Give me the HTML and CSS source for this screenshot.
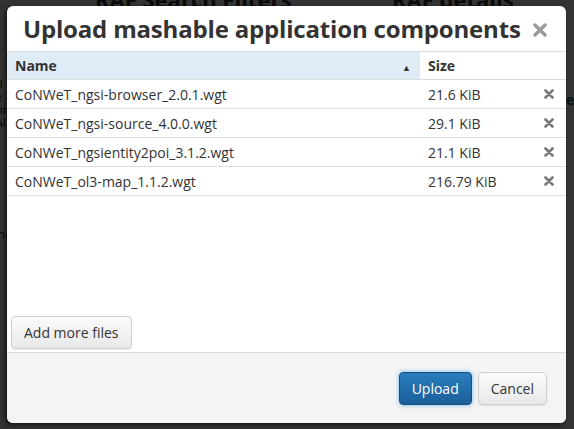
FILE: index.html
```html
<!DOCTYPE html>
<html>
<head>
<meta charset="utf-8">
<link rel="stylesheet" href="styles.css">
</head>
<body>
<div class="page">
  <div class="bg-top">
    <span class="bg-title t1">RAF Search Filters</span>
    <span class="bg-title t2">RAF details</span>
  </div>
  <div class="bg-left">
    <span>d</span><span>e</span><span>nt</span><span>Al</span>
  </div>
  <div class="bg-left2">nc</div>
  <div class="bg-right">e</div>
</div>
<div class="overlay"></div>
<div class="modal">
  <div class="modal-header">
    <h1 class="modal-title">Upload mashable application components</h1>
    <span class="close">
      <svg width="14" height="14" viewBox="0 0 14 14"><path d="M2 2 L12 12 M12 2 L2 12" stroke="#9a9a9a" stroke-width="3.4" stroke-linecap="round"/></svg>
    </span>
  </div>
  <div class="modal-body">
    <div class="table-wrap">
      <table class="files">
        <thead>
          <tr>
            <th class="col-name sorted">Name<span class="sort">&#9650;</span></th>
            <th class="col-size">Size</th>
            <th class="col-act"></th>
          </tr>
        </thead>
        <tbody>
          <tr><td>CoNWeT_ngsi-browser_2.0.1.wgt</td><td>21.6 KiB</td><td class="act"><svg width="10" height="10" viewBox="0 0 10 10"><path d="M1.5 1.5 L8.5 8.5 M8.5 1.5 L1.5 8.5" stroke="#777" stroke-width="2.6" stroke-linecap="round"/></svg></td></tr>
          <tr><td>CoNWeT_ngsi-source_4.0.0.wgt</td><td>29.1 KiB</td><td class="act"><svg width="10" height="10" viewBox="0 0 10 10"><path d="M1.5 1.5 L8.5 8.5 M8.5 1.5 L1.5 8.5" stroke="#777" stroke-width="2.6" stroke-linecap="round"/></svg></td></tr>
          <tr><td>CoNWeT_ngsientity2poi_3.1.2.wgt</td><td>21.1 KiB</td><td class="act"><svg width="10" height="10" viewBox="0 0 10 10"><path d="M1.5 1.5 L8.5 8.5 M8.5 1.5 L1.5 8.5" stroke="#777" stroke-width="2.6" stroke-linecap="round"/></svg></td></tr>
          <tr><td>CoNWeT_ol3-map_1.1.2.wgt</td><td>216.79 KiB</td><td class="act"><svg width="10" height="10" viewBox="0 0 10 10"><path d="M1.5 1.5 L8.5 8.5 M8.5 1.5 L1.5 8.5" stroke="#777" stroke-width="2.6" stroke-linecap="round"/></svg></td></tr>
        </tbody>
      </table>
    </div>
    <div class="body-actions">
      <button class="btn">Add more files</button>
    </div>
  </div>
  <div class="modal-footer">
    <button class="btn btn-primary">Upload</button>
    <button class="btn">Cancel</button>
  </div>
</div>
</body>
</html>
```

FILE: styles.css
```css
html, body {
  margin: 0;
  padding: 0;
  width: 574px;
  height: 429px;
  overflow: hidden;
  font-family: "Open Sans", "Liberation Sans", sans-serif;
  background: #fff;
}

.page {
  position: relative;
  width: 574px;
  height: 429px;
  color: #222;
}

.bg-top {
  position: absolute;
  left: 0;
  top: -16px;
  width: 574px;
  height: 22px;
}
.bg-title {
  position: absolute;
  top: 0;
  font-size: 22px;
  font-weight: bold;
  color: #333;
}
.t1 { left: 95px; }
.t2 { left: 392px; }

.bg-left {
  position: absolute;
  left: -4px;
  top: 78px;
  display: flex;
  flex-direction: column;
  gap: 2px;
  font-size: 11px;
  line-height: 11px;
  color: #222;
}
.bg-left2 {
  position: absolute;
  left: -3px;
  top: 225px;
  font-size: 13px;
  color: #222;
}
.bg-right {
  position: absolute;
  left: 566px;
  top: 90px;
  font-size: 14px;
  font-weight: bold;
  color: #1d5f73;
}

.overlay {
  position: absolute;
  left: 0;
  top: 0;
  width: 574px;
  height: 429px;
  background: rgba(0, 0, 0, 0.8);
}

.modal {
  position: absolute;
  left: 7px;
  top: 6px;
  width: 559px;
  height: 417px;
  background: #fff;
  border-radius: 6px;
  box-shadow: -2px 2px 4px rgba(0, 0, 0, 0.6);
  display: flex;
  flex-direction: column;
  overflow: hidden;
  color: #333;
}

.modal-header {
  height: 45px;
  border-bottom: 1px solid #dcdcdc;
  display: flex;
  align-items: center;
  padding: 0 19px 0 16px;
  flex: none;
}
.modal-title {
  margin: 0;
  flex: 1;
  font-size: 24px;
  font-weight: bold;
  color: #333;
  letter-spacing: -0.18px;
  white-space: nowrap;
}
.close {
  display: flex;
  margin-top: 2px;
}

.modal-body {
  flex: 1;
  display: flex;
  flex-direction: column;
  padding: 0 0 3px 4px;
}
.table-wrap {
  flex: 1;
  margin-left: -4px;
}
.files {
  width: 100%;
  border-collapse: collapse;
  font-size: 14px;
}
.files th, .files td {
  height: 28px;
  padding: 0 0 0 8px;
  border-bottom: 1px solid #dedede;
  text-align: left;
  white-space: nowrap;
}
.files th {
  font-weight: bold;
  height: 27px;
}
.col-name {
  width: 405px;
  position: relative;
}
.sorted { background: #dfecf6; }
.sort {
  position: absolute;
  right: 9px;
  top: 9px;
  font-size: 9px;
  color: #333;
}
.col-size { width: 100px; }
.act {
  padding-left: 16px !important;
}
.act svg { display: block; }

.body-actions {
  display: flex;
}

.btn {
  font-family: "Open Sans", "Liberation Sans", sans-serif;
  font-size: 14px;
  color: #333;
  height: 33px;
  padding: 0 12px;
  border: 1px solid #cfcfcf;
  border-radius: 4px;
  background: linear-gradient(#fbfbfb, #e8e8e8);
  box-shadow: 0 1px 1px rgba(0, 0, 0, 0.08);
}

.modal-footer {
  flex: none;
  height: 70px;
  background: #f4f4f4;
  border-top: 1px solid #dadada;
  display: flex;
  justify-content: flex-end;
  align-items: center;
  gap: 6px;
  padding: 0 19px 0 0;
}
.btn-primary {
  color: #fff;
  background: linear-gradient(#2a7dbc, #1a5f9b);
  border: 1px solid #154f80;
  box-shadow: 0 0 5px rgba(70, 160, 230, 0.7);
  padding: 0 12px;
}
```
